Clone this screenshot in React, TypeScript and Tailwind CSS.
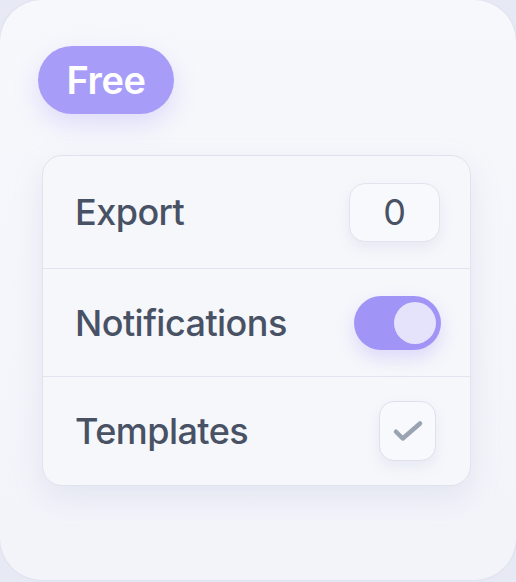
import { useState } from "react";

export default function App() {
  const [notify, setNotify] = useState(true);
  const [templates, setTemplates] = useState(true);

  return (
    <div className="w-[516px] h-[582px] bg-[#e7e9f4] font-['Inter',sans-serif]">
      <div className="w-[516px] h-[580px] rounded-[42px] bg-gradient-to-b from-[#f7f8fc] to-[#f3f4fa] shadow-[0_0_2px_rgba(160,170,200,0.35)] pt-[46px]">
        <div className="ml-[38px] w-[136px] h-[68px] rounded-full bg-[#a79df8] flex items-center justify-center shadow-[0_10px_24px_rgba(167,157,248,0.3)]">
          <span className="text-white text-[38px] font-semibold tracking-[-0.01em]">Free</span>
        </div>

        <div className="mt-[41px] ml-[42px] w-[429px] rounded-[20px] border border-[#dfe3ee] bg-[#f6f7fb] shadow-[0_12px_30px_rgba(150,160,200,0.18)]">
          <div className="h-[113px] flex items-center justify-between pl-[32px] pr-[30px] border-b border-[#e1e5ef]">
            <span className="text-[36px] font-medium text-[#485264] tracking-[-0.015em]">Export</span>
            <div className="w-[91px] h-[59px] rounded-[16px] border border-[#e0e4ee] bg-[#f8f9fc] flex items-center justify-center shadow-[0_6px_14px_rgba(150,160,200,0.15)]">
              <span className="text-[36px] text-[#485264]">0</span>
            </div>
          </div>

          <div className="h-[108px] flex items-center justify-between pl-[32px] pr-[29px] border-b border-[#e1e5ef]">
            <span className="text-[36px] font-medium text-[#485264] tracking-[-0.015em]">Notifications</span>
            <button
              onClick={() => setNotify(!notify)}
              className={
                "w-[87px] h-[54px] rounded-full flex items-center px-[5px] shadow-[0_8px_18px_rgba(160,147,247,0.3)] " +
                (notify ? "bg-[#a094f7] justify-end" : "bg-[#d9dcea] justify-start")
              }
            >
              <span className="w-[42px] h-[42px] rounded-full bg-[#e5e3fc]" />
            </button>
          </div>

          <div className="h-[108px] flex items-center justify-between pl-[32px] pr-[34px]">
            <span className="text-[36px] font-medium text-[#485264] tracking-[-0.015em]">Templates</span>
            <button
              onClick={() => setTemplates(!templates)}
              className="w-[57px] h-[60px] rounded-[15px] border border-[#dde1eb] bg-[#f8f9fc] flex items-center justify-center shadow-[0_6px_14px_rgba(150,160,200,0.15)]"
            >
              {templates && (
                <svg width="36" height="36" viewBox="0 0 24 24" fill="none">
                  <path d="M4 12.5l4.5 4.5L20 7" stroke="#9aa3b1" strokeWidth="3" strokeLinecap="round" strokeLinejoin="round" />
                </svg>
              )}
            </button>
          </div>
        </div>
      </div>
    </div>
  );
}
